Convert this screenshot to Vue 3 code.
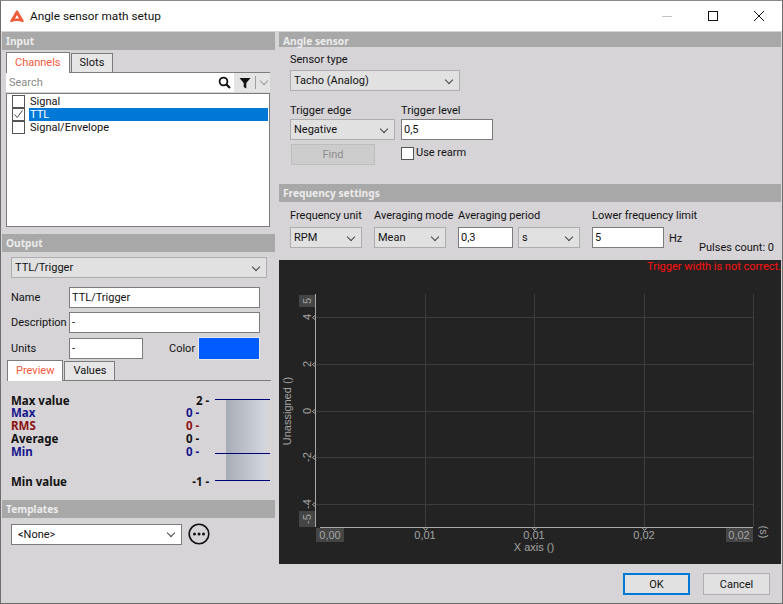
<script setup>
const channels = [
  { name: 'Signal', checked: false, selected: false },
  { name: 'TTL', checked: true, selected: true },
  { name: 'Signal/Envelope', checked: false, selected: false }
]

const stats = [
  { label: 'Max value', value: '2', cls: 'limit first' },
  { label: 'Max', value: '0', cls: 'navy' },
  { label: 'RMS', value: '0', cls: 'dark-red' },
  { label: 'Average', value: '0', cls: '' },
  { label: 'Min', value: '0', cls: 'navy' },
  { label: 'Min value', value: '-1', cls: 'limit last' }
]

// chart grid, in page pixels minus the chart origin (279, 260)
const gridX = [146, 255, 365, 474]
const gridY = [57, 104, 151, 197, 244]
const xTicks = [
  { x: 146, t: '0,01' },
  { x: 255, t: '0,01' },
  { x: 365, t: '0,02' }
]
const yTicks = [
  { y: 57, t: '4' },
  { y: 104, t: '2' },
  { y: 151, t: '0' },
  { y: 197, t: '-2' },
  { y: 244, t: '-4' }
]
</script>

<template>
  <div class="window">
    <header class="titlebar">
      <svg class="logo" width="14" height="13" viewBox="0 0 14 13">
        <path d="M7 0.3 Q7.6 0.3 8 1 L13.6 10.6 Q14.2 12 12.8 12.2 Q10 11 7 11 Q4 11 1.2 12.2 Q-0.2 12 0.4 10.6 L6 1 Q6.4 0.3 7 0.3 Z M7 5 L5 8.4 L9 8.4 Z" fill="#ee5c3a" fill-rule="evenodd" />
      </svg>
      <span class="title">Angle sensor math setup</span>
      <div class="winbtns">
        <svg width="12" height="12" viewBox="0 0 12 12"><path d="M1 6.5H11" stroke="#c4c4c4" /></svg>
        <svg width="12" height="12" viewBox="0 0 12 12"><rect x="1.5" y="1.5" width="9" height="9" fill="none" stroke="#111" /></svg>
        <svg width="12" height="12" viewBox="0 0 12 12"><path d="M1 1L11 11M11 1L1 11" stroke="#111" /></svg>
      </div>
    </header>

    <div class="body">
      <aside class="left">
        <h2 class="section">Input</h2>
        <div class="input-pane">
          <div class="tabs">
            <span class="tab active">Channels</span>
            <span class="tab">Slots</span>
          </div>
          <div class="searchrow">
            <div class="search">
              <span class="placeholder">Search</span>
              <svg width="13" height="13" viewBox="0 0 13 13">
                <circle cx="5.5" cy="5.5" r="3.9" fill="none" stroke="#111" stroke-width="1.8" />
                <path d="M8.5 8.5L12 12" stroke="#111" stroke-width="2.2" />
              </svg>
            </div>
            <div class="filter">
              <svg width="12" height="12" viewBox="0 0 12 12"><path d="M0.5 1H11.5L7.3 6V11.5L4.7 10V6Z" fill="#111" /></svg>
              <i class="sep"></i>
              <i class="chev light"></i>
            </div>
          </div>
          <ul class="channels">
            <li v-for="c in channels" :key="c.name">
              <span class="check">
                <svg v-if="c.checked" width="11" height="11" viewBox="0 0 11 11"><path d="M1.5 5.5L4.2 8.5L9.5 1.5" fill="none" stroke="#444" /></svg>
              </span>
              <span class="chname" :class="{ selected: c.selected }">{{ c.name }}</span>
            </li>
          </ul>
        </div>

        <h2 class="section">Output</h2>
        <div class="output-pane">
          <div class="combo wide"><span>TTL/Trigger</span><i class="chev"></i></div>
          <div class="frow name"><label>Name</label><input class="field w191" value="TTL/Trigger" /></div>
          <div class="frow"><label>Description</label><input class="field w191" value="-" /></div>
          <div class="frow">
            <label>Units</label><input class="field w74" value="-" />
            <label class="colorlabel">Color</label><span class="swatch"></span>
          </div>
        </div>
        <div class="tabs preview-tabs">
          <span class="tab active">Preview</span>
          <span class="tab">Values</span>
        </div>
        <div class="preview">
          <div class="stats">
            <div v-for="s in stats" :key="s.label" class="stat" :class="s.cls">
              <span>{{ s.label }}</span><span class="val">{{ s.value }} -</span>
            </div>
          </div>
          <div class="gauge">
            <i class="gline" style="top: 0"></i>
            <i class="gline" style="top: 54px"></i>
            <i class="gline" style="top: 81px"></i>
          </div>
        </div>

        <h2 class="section">Templates</h2>
        <div class="templates">
          <div class="combo white"><span>&lt;None&gt;</span><i class="chev"></i></div>
          <svg width="22" height="22" viewBox="0 0 22 22">
            <circle cx="11" cy="11" r="9.8" fill="none" stroke="#111" stroke-width="1.6" />
            <circle cx="6.5" cy="11" r="1.5" fill="#111" />
            <circle cx="11" cy="11" r="1.5" fill="#111" />
            <circle cx="15.5" cy="11" r="1.5" fill="#111" />
          </svg>
        </div>
      </aside>

      <main class="right">
        <h2 class="section short">Angle sensor</h2>
        <div class="sensor">
          <label class="cap">Sensor type</label>
          <div class="combo w170"><span>Tacho (Analog)</span><i class="chev"></i></div>
          <div class="trigger">
            <div class="col">
              <label class="cap">Trigger edge</label>
              <div class="combo w105"><span>Negative</span><i class="chev"></i></div>
              <button class="find" disabled>Find</button>
            </div>
            <div class="col">
              <label class="cap">Trigger level</label>
              <input class="field w92" value="0,5" />
              <div class="rearm"><span class="check"></span><span>Use rearm</span></div>
            </div>
          </div>
        </div>

        <h2 class="section">Frequency settings</h2>
        <div class="freq">
          <div class="col unit">
            <label class="cap">Frequency unit</label>
            <div class="combo w72"><span>RPM</span><i class="chev"></i></div>
          </div>
          <div class="col mode">
            <label class="cap">Averaging mode</label>
            <div class="combo w72"><span>Mean</span><i class="chev"></i></div>
          </div>
          <div class="col period">
            <label class="cap">Averaging period</label>
            <div class="pair">
              <input class="field w55" value="0,3" />
              <div class="combo w62"><span>s</span><i class="chev"></i></div>
            </div>
          </div>
          <div class="col lower">
            <label class="cap">Lower frequency limit</label>
            <div class="pair">
              <input class="field w72" value="5" />
              <span class="hz">Hz</span>
            </div>
          </div>
          <span class="pulses">Pulses count: 0</span>
        </div>

        <div class="chart">
          <span class="warning">Trigger width is not correct.</span>
          <svg width="502" height="304" viewBox="0 0 502 304">
            <g stroke="#3d3d3d" stroke-width="1">
              <line v-for="x in gridX" :key="x" :x1="x + 0.5" :x2="x + 0.5" y1="34" y2="267" />
              <line v-for="y in gridY" :key="y" x1="37" x2="474" :y1="y + 0.5" :y2="y + 0.5" />
            </g>
            <g fill="none" stroke="#a8a8a8">
              <path d="M36.5 34V267M41 267.5H474" />
              <path v-for="y in gridY" :key="'ty' + y" :d="`M36 ${y - 1.5}L33.5 ${y + 0.5}L36 ${y + 2.5}`" />
              <path v-for="x in gridX.slice(0, 3)" :key="'tx' + x" :d="`M${x - 1.5} 268L${x + 0.5} 270.5L${x + 2.5} 268`" />
            </g>
            <rect x="37" y="268" width="28" height="14" fill="#454545" />
            <rect x="447" y="268" width="27" height="14" fill="#454545" />
            <rect x="20" y="35" width="16" height="12" fill="#454545" />
            <rect x="20" y="251" width="16" height="16" fill="#454545" />
            <g class="tick">
              <text x="51" y="279" text-anchor="middle">0,00</text>
              <text v-for="t in xTicks" :key="t.x" :x="t.x" y="279" text-anchor="middle">{{ t.t }}</text>
              <text x="460" y="279" text-anchor="middle">0,02</text>
              <text x="255" y="291" text-anchor="middle">X axis ()</text>
              <text transform="translate(481 272) rotate(90)" text-anchor="middle">(s)</text>
              <text transform="translate(32 41) rotate(-90)" text-anchor="middle">5</text>
              <text transform="translate(32 259) rotate(-90)" text-anchor="middle">-5</text>
              <text v-for="t in yTicks" :key="t.y" :transform="`translate(32 ${t.y}) rotate(-90)`" text-anchor="middle">{{ t.t }}</text>
              <text transform="translate(12 151) rotate(-90)" text-anchor="middle">Unassigned ()</text>
            </g>
          </svg>
        </div>

        <footer class="buttons">
          <button class="btn primary">OK</button>
          <button class="btn">Cancel</button>
        </footer>
      </main>
    </div>
  </div>
</template>

<style>
html, body {
  margin: 0;
  background: #d6d4d7;
}
</style>

<style scoped>
* {
  box-sizing: border-box;
}

.window {
  width: 783px;
  height: 604px;
  display: flex;
  flex-direction: column;
  background: #d6d4d7;
  border: 1px solid #6e6e6e;
  border-top-color: #8a8a8a;
  font-family: Roboto, "Noto Sans", sans-serif;
  font-size: 11px;
  line-height: 14px;
  color: #111;
  overflow: hidden;
}

/* title bar */
.titlebar {
  height: 30px;
  flex: none;
  background: #fff;
  display: flex;
  align-items: center;
  padding-left: 9px;
}
.title {
  margin-left: 6px;
  font-size: 11.8px;
}
.winbtns {
  margin-left: auto;
  display: flex;
  gap: 34px;
  padding-right: 17px;
}

.body {
  flex: 1;
  display: flex;
  min-height: 0;
  padding-top: 1px;
}

.section {
  margin: 0;
  height: 18px;
  padding-left: 4px;
  background: #a8a8a8;
  color: #ececec;
  font-family: "Noto Sans", sans-serif;
  font-size: 10.2px;
  font-weight: 700;
  line-height: 18px;
}
.section.short {
  height: 15px;
}

/* left column */
.left {
  width: 273px;
  margin-left: 1px;
  flex: none;
  display: flex;
  flex-direction: column;
}
.input-pane {
  padding: 2px 4px 0;
  margin-bottom: 7px;
}
.tabs {
  display: flex;
  align-items: flex-end;
  height: 21px;
  border-bottom: 1px solid #7c7c7c;
  width: 264px;
}
.tab {
  height: 19px;
  padding: 0 8px;
  margin-left: 1px;
  background: #e6e6e6;
  border: 1px solid #7c7c7c;
  border-bottom: none;
  line-height: 18px;
}
.tab.active {
  height: 21px;
  margin-left: 0;
  margin-bottom: -1px;
  padding: 0 8px;
  background: #fff;
  color: #f2593a;
  line-height: 20px;
}
.searchrow {
  display: flex;
  height: 19px;
  width: 264px;
}
.search {
  width: 228px;
  background: #fff;
  display: flex;
  align-items: center;
  justify-content: space-between;
  padding: 0 3px;
}
.placeholder {
  color: #8a8a8a;
}
.filter {
  flex: 1;
  display: flex;
  align-items: center;
  padding-left: 5px;
  background: #e4e4e4;
}
.sep {
  width: 1px;
  height: 13px;
  margin: 0 5px 0 4px;
  background: #a0a0a0;
}
.channels {
  list-style: none;
  margin: 1px 0 0;
  padding: 1px 1px 0 5px;
  width: 264px;
  height: 134px;
  background: #fff;
  border: 1px solid #7c7c7c;
}
.channels li {
  display: flex;
  height: 13px;
  line-height: 13px;
}
.check {
  width: 13px;
  height: 13px;
  flex: none;
  display: inline-flex;
  align-items: center;
  justify-content: center;
  background: #fff;
  border: 1px solid #555;
}
.chname {
  flex: 1;
  margin-left: 4px;
  padding-left: 1px;
}
.chname.selected {
  background: #0078d7;
  color: #fff;
}

.output-pane {
  padding: 5px 0 0 9px;
}
.combo {
  height: 21px;
  flex: none;
  display: flex;
  align-items: center;
  justify-content: space-between;
  padding: 1px 7px 0 3px;
  background: #e1e1e1;
  border: 1px solid #adadad;
}
.combo.white {
  width: 171px;
  padding-left: 6px;
  background: #fff;
  border-color: #7c7c7c;
}
.wide { width: 256px; }
.w170 { width: 170px; }
.w105 { width: 105px; }
.w72 { width: 72px; }
.w62 { width: 62px; }
.chev {
  width: 6px;
  height: 6px;
  margin-top: -3px;
  flex: none;
  border-right: 1px solid #444;
  border-bottom: 1px solid #444;
  transform: rotate(45deg);
}
.chev.light {
  border-color: #9a9a9a;
}
.frow {
  display: flex;
  align-items: center;
  margin-top: 4px;
}
.frow.name {
  margin-top: 9px;
}
.frow label:first-child {
  width: 58px;
}
.field {
  height: 21px;
  flex: none;
  padding: 0 2px;
  background: #fff;
  border: 1px solid #7c7c7c;
  border-radius: 0;
  font: inherit;
  color: inherit;
  outline: none;
}
.w191 { width: 191px; }
.w74 { width: 74px; }
.w92 { width: 92px; }
.w55 { width: 55px; }
.colorlabel {
  margin-left: 26px;
  width: 29px;
}
.swatch {
  width: 62px;
  height: 23px;
  background: #005cff;
  border: 1px solid #e8e8e8;
}
.preview-tabs {
  margin: 0 0 0 5px;
}

.preview {
  height: 119px;
  padding: 13px 5px 0 9px;
  display: flex;
  font-family: "Noto Sans", sans-serif;
  font-size: 11.5px;
  font-weight: 700;
}
.stats {
  width: 199px;
}
.stat {
  display: flex;
  justify-content: space-between;
  height: 13px;
  line-height: 13px;
  padding-right: 10px;
}
.stat.limit {
  padding-right: 0;
}
.stat.first {
  height: 12px;
}
.stat.last {
  margin-top: 17px;
}
.navy { color: #14148c; }
.dark-red { color: #8c1010; }
.gauge {
  position: relative;
  width: 55px;
  height: 81px;
  margin: 5px 0 0 6px;
  background: linear-gradient(90deg, transparent 11px, #a8acb4 11px, #d2d6de 50px, transparent 50px);
}
.gline {
  position: absolute;
  left: 0;
  right: 0;
  height: 1px;
  background: #00007a;
}
.templates {
  padding: 5px 0 0 9px;
  display: flex;
  align-items: center;
  gap: 6px;
}

/* right column */
.right {
  flex: 1;
  min-width: 0;
  margin: 0 1px 0 4px;
  display: flex;
  flex-direction: column;
}
.cap {
  display: block;
}
.sensor {
  padding: 6px 0 0 11px;
  height: 137px;
}
.sensor .combo {
  margin-top: 3px;
}
.col {
  display: flex;
  flex-direction: column;
  flex: none;
}
.trigger {
  display: flex;
  gap: 6px;
  margin-top: 13px;
}
.trigger .cap {
  margin-bottom: 1px;
}
.trigger .combo {
  margin-top: 0;
}
.find {
  width: 84px;
  height: 21px;
  margin: 4px 0 0 1px;
  background: #cccccc;
  border: 1px solid #bdbdbd;
  color: #8c8c8c;
  font: inherit;
}
.rearm {
  display: flex;
  align-items: center;
  gap: 2px;
  margin-top: 6px;
}
.freq {
  display: flex;
  height: 58px;
  padding: 7px 0 0 11px;
}
.freq .cap {
  margin-bottom: 4px;
  white-space: nowrap;
}
.unit { width: 84px; }
.mode { width: 84px; }
.period { width: 134px; }
.pair {
  display: flex;
  align-items: flex-start;
  gap: 5px;
}
.hz {
  margin-top: 5px;
}
.pulses {
  align-self: flex-end;
  margin: 0 0 5px auto;
  padding-right: 7px;
  white-space: nowrap;
}
.chart {
  position: relative;
  width: 502px;
  height: 304px;
  flex: none;
  background: #232323;
}
.chart svg {
  display: block;
}
.warning {
  position: absolute;
  top: 0;
  right: 0;
  color: #ff1010;
}
.tick {
  fill: #a4a4a4;
  font-family: "Liberation Sans", Arial, sans-serif;
  font-size: 11px;
}
.buttons {
  display: flex;
  justify-content: flex-end;
  gap: 13px;
  padding: 9px 11px 0 0;
}
.btn {
  width: 67px;
  height: 22px;
  padding: 1px 0 0;
  background: #e1e1e1;
  border: 1px solid #adadad;
  font: inherit;
  color: #111;
}
.btn.primary {
  border: 2px solid #0078d7;
}
</style>
